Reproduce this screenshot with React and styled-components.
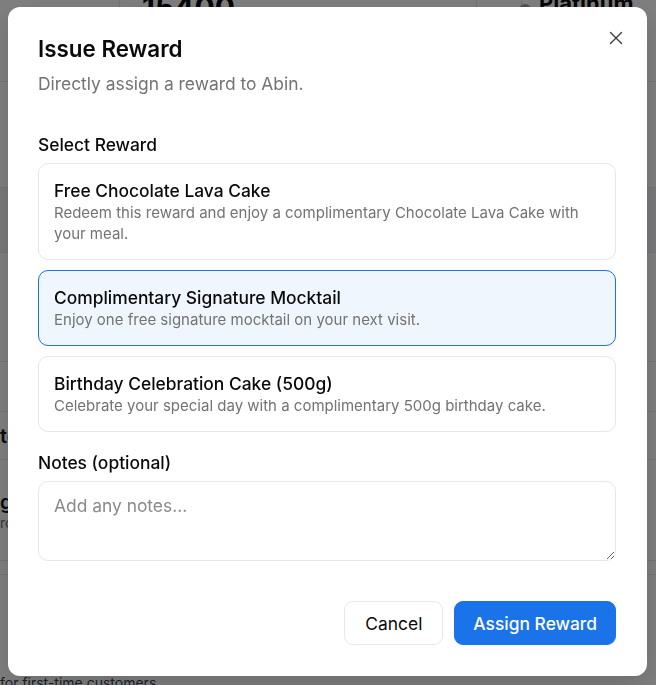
import React, { useState } from "react";
import styled, { createGlobalStyle } from "styled-components";

const Global = createGlobalStyle`
  html, body { margin: 0; padding: 0; }
  body { font-family: Inter, "Noto Sans", sans-serif; background: #ffffff; color: #0a0a0a; }
  * { box-sizing: border-box; }
`;

const Page = styled.div`
  width: 656px;
  height: 685px;
  overflow: hidden;
  background: #ffffff;
  display: flex;
  flex-direction: column;
`;

const StatsRow = styled.div`
  display: grid;
  grid-template-columns: 120px 357px 20px 1fr;
  height: 82px;
  border-bottom: 1px solid #e5e7eb;
`;

const StatCell = styled.div`
  border-right: 1px solid ${(p) => (p.$line ? "#e5e7eb" : "transparent")};
  display: flex;
  align-items: flex-start;
  gap: 8px;
  padding: 0 22px;
  font-size: ${(p) => (p.$big ? "30px" : "22px")};
  font-weight: 700;
  line-height: 1;
  margin-top: -8px;
`;

const Dot = styled.span`
  width: 12px;
  height: 12px;
  border-radius: 50%;
  background: #9ca3af;
  margin-top: 12px;
`;

const BgRow = styled.div`
  height: ${(p) => p.$h}px;
  border-bottom: 1px solid #e5e7eb;
  background: ${(p) => p.$bg || "transparent"};
  display: flex;
  flex-direction: column;
  justify-content: center;
  font-size: 20px;
  font-weight: 600;
  color: #111827;
  white-space: nowrap;
`;

const BgSub = styled.span`
  font-size: 14px;
  font-weight: 400;
  color: #6b7280;
`;

const BgFooter = styled.div`
  font-size: 14px;
  color: #374151;
  margin-top: auto;
  margin-bottom: -6px;
`;

const Overlay = styled.div`
  position: fixed;
  inset: 0;
  background: rgba(0, 0, 0, 0.5);
  display: flex;
  align-items: flex-start;
  justify-content: flex-start;
  padding: 7px 0 0 8px;
`;

const Dialog = styled.div`
  position: relative;
  width: 639px;
  background: #ffffff;
  border-radius: 12px;
  padding: 30px 31px 31px 30px;
  display: flex;
  flex-direction: column;
  box-shadow: 0 10px 30px rgba(0, 0, 0, 0.15);
`;

const CloseButton = styled.button`
  position: absolute;
  top: 24px;
  right: 24px;
  width: 14px;
  height: 14px;
  padding: 0;
  border: none;
  background: transparent;
  color: #3f3f46;
  display: flex;
  align-items: center;
  justify-content: center;
  cursor: pointer;
`;

const Title = styled.h2`
  margin: 0;
  font-size: 22.4px;
  line-height: 24px;
  font-weight: 600;
  color: #0a0a0a;
`;

const Subtitle = styled.p`
  margin: 11px 0 0 0;
  font-size: 17.4px;
  line-height: 24px;
  color: #737373;
`;

const Label = styled.div`
  margin-top: ${(p) => p.$mt}px;
  font-size: 17.4px;
  line-height: 24px;
  font-weight: 500;
  color: #0a0a0a;
`;

const OptionList = styled.div`
  margin-top: 6px;
  display: flex;
  flex-direction: column;
  gap: 10px;
`;

const Option = styled.button`
  display: flex;
  flex-direction: column;
  align-items: flex-start;
  text-align: left;
  width: 100%;
  padding: 15px 15px;
  border-radius: 10px;
  border: 1px solid ${(p) => (p.$selected ? "#1a73e8" : "#e5e7eb")};
  background: ${(p) => (p.$selected ? "#f0f6fe" : "#ffffff")};
  font-family: inherit;
  cursor: pointer;
`;

const OptionTitle = styled.span`
  font-size: 17.4px;
  line-height: 23px;
  font-weight: 500;
  color: #0a0a0a;
`;

const OptionDesc = styled.span`
  font-size: 15px;
  line-height: 21px;
  color: #737373;
`;

const Notes = styled.textarea`
  margin-top: 6px;
  width: 100%;
  height: 80px;
  border: 1px solid #e5e7eb;
  border-radius: 10px;
  padding: 12px 15px;
  font-family: inherit;
  font-size: 17.4px;
  line-height: 24px;
  color: #0a0a0a;
  resize: vertical;
  outline: none;
  &::placeholder { color: #8a8a8a; }
`;

const Footer = styled.div`
  margin-top: 40px;
  display: flex;
  justify-content: flex-end;
  gap: 11px;
`;

const Button = styled.button`
  height: 44px;
  padding: 0 ${(p) => (p.$primary ? "18px" : "20px")};
  border-radius: 9px;
  font-family: inherit;
  font-size: 17.4px;
  font-weight: ${(p) => (p.$primary ? 500 : 400)};
  border: 1px solid ${(p) => (p.$primary ? "#1a73e8" : "#e5e7eb")};
  background: ${(p) => (p.$primary ? "#1a73e8" : "#ffffff")};
  color: ${(p) => (p.$primary ? "#ffffff" : "#0a0a0a")};
  cursor: pointer;
`;

const rewards = [
  {
    id: 1,
    title: "Free Chocolate Lava Cake",
    desc: "Redeem this reward and enjoy a complimentary Chocolate Lava Cake with your meal.",
  },
  {
    id: 2,
    title: "Complimentary Signature Mocktail",
    desc: "Enjoy one free signature mocktail on your next visit.",
  },
  {
    id: 3,
    title: "Birthday Celebration Cake (500g)",
    desc: "Celebrate your special day with a complimentary 500g birthday cake.",
  },
];

export default function App() {
  const [selected, setSelected] = useState(2);
  return (
    <>
      <Global />
      <Page>
        <StatsRow>
          <StatCell $line />
          <StatCell $line $big>15400</StatCell>
          <StatCell $line />
          <StatCell>
            <Dot />
            Platinum
          </StatCell>
        </StatsRow>
        <BgRow $h={106} />
        <BgRow $h={65} $bg="#f3f4f6" />
        <BgRow $h={109} />
        <BgRow $h={50} />
        <BgRow $h={48}>to</BgRow>
        <BgRow $h={101}>
          <span>g</span>
          <BgSub>rc</BgSub>
        </BgRow>
        <BgRow $h={14} />
        <BgFooter>for first-time customers</BgFooter>
      </Page>
      <Overlay>
        <Dialog role="dialog">
          <CloseButton aria-label="Close">
            <svg width="14" height="14" viewBox="0 0 14 14" fill="none">
              <path d="M1.5 1.5L12.5 12.5M12.5 1.5L1.5 12.5" stroke="currentColor" strokeWidth="1.4" strokeLinecap="round" />
            </svg>
          </CloseButton>
          <Title>Issue Reward</Title>
          <Subtitle>Directly assign a reward to Abin.</Subtitle>
          <Label $mt={37}>Select Reward</Label>
          <OptionList>
            {rewards.map((r) => (
              <Option key={r.id} $selected={selected === r.id} onClick={() => setSelected(r.id)}>
                <OptionTitle>{r.title}</OptionTitle>
                <OptionDesc>{r.desc}</OptionDesc>
              </Option>
            ))}
          </OptionList>
          <Label $mt={19}>Notes (optional)</Label>
          <Notes placeholder="Add any notes..." />
          <Footer>
            <Button>Cancel</Button>
            <Button $primary>Assign Reward</Button>
          </Footer>
        </Dialog>
      </Overlay>
    </>
  );
}
